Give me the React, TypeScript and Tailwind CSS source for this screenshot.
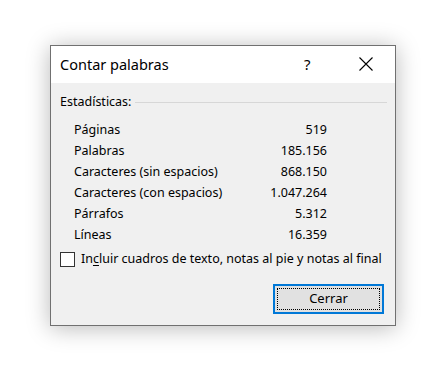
import React from "react";

const rows: [string, string][] = [
  ["Páginas", "519"],
  ["Palabras", "185.156"],
  ["Caracteres (sin espacios)", "868.150"],
  ["Caracteres (con espacios)", "1.047.264"],
  ["Párrafos", "5.312"],
  ["Líneas", "16.359"],
];

export default function App() {
  return (
    <div
      className="w-[445px] h-[378px] bg-white pt-[45px] pl-[50px] text-black"
      style={{ fontFamily: '"Noto Sans", "Open Sans", sans-serif' }}
    >
      <div className="w-[346px] h-[281px] border border-[#707070] bg-[#f0f0f0] flex flex-col shadow-[0_2px_22px_rgba(0,0,0,0.28)]">
        <div className="h-[37px] bg-white flex items-center pl-[9px] pr-[22px]">
          <span className="text-[14.5px] leading-none flex-1">Contar palabras</span>
          <span className="text-[15px] leading-none w-[8px] mr-[47px]">?</span>
          <svg width="14" height="14" viewBox="0 0 14 14" className="mb-[1px]">
            <path d="M0.5 0.5 L13.5 13.5 M13.5 0.5 L0.5 13.5" stroke="#000" strokeWidth="1.1" fill="none" />
          </svg>
        </div>
        <div className="flex-1 flex flex-col text-[12.5px] leading-none">
          <div className="flex items-center mt-[13px] pl-[9px] pr-[8px]">
            <span>Estadísticas:</span>
            <div className="flex-1 h-px bg-[#d7d7d7] ml-[4px] mt-[1px]" />
          </div>
          <div className="flex flex-col mt-[11px] pl-[23px] w-[276px]">
            {rows.map(([k, v]) => (
              <div key={k} className="flex justify-between items-center h-[21px]">
                <span>{k}</span>
                <span>{v}</span>
              </div>
            ))}
          </div>
          <div className="flex items-center mt-[6px] pl-[9px]">
            <div className="w-[15px] h-[15px] border border-[#333] bg-white" />
            <span className="ml-[6px]">
              In<span className="underline underline-offset-2">c</span>luir cuadros de texto, notas al pie y notas al final
            </span>
          </div>
          <div className="flex justify-end pr-[11px] mt-[17px]">
            <div className="w-[111px] h-[30px] border-2 border-[#0078d7] bg-[#e1e1e1] p-[2px]">
              <div className="w-full h-full border border-dotted border-black flex items-center justify-center text-[13px]">
                Cerrar
              </div>
            </div>
          </div>
        </div>
      </div>
    </div>
  );
}
